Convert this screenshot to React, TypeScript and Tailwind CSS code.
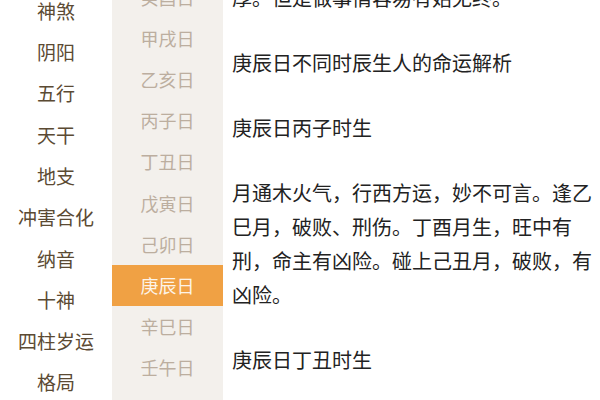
import React from "react";

const leftItems = ["神煞", "阴阳", "五行", "天干", "地支", "冲害合化", "纳音", "十神", "四柱岁运", "格局"];
const midItems = ["癸酉日", "甲戌日", "乙亥日", "丙子日", "丁丑日", "戊寅日", "己卯日", "庚辰日", "辛巳日", "壬午日", "癸未日"];

export default function App() {
  const font = { fontFamily: '"Noto Sans CJK SC", "Noto Sans", sans-serif' };
  return (
    <div className="w-[600px] h-[400px] overflow-hidden flex bg-white" style={font}>
      <div className="w-[112px] shrink-0 flex flex-col -mt-[9.6px]">
        {leftItems.map((t) => (
          <div key={t} className="h-[41.3px] shrink-0 flex items-center justify-center text-[19px] text-[#5b4a33]">
            {t}
          </div>
        ))}
      </div>
      <div className="w-[111px] shrink-0 bg-[#f3f0ec] flex flex-col -mt-[23.4px]">
        {midItems.map((t) => (
          <div
            key={t}
            className={
              t === "庚辰日"
                ? "h-[41.2px] shrink-0 flex items-center justify-center text-[18px] bg-[#f0a144] text-[#fdf4e8]"
                : "h-[41.2px] shrink-0 flex items-center justify-center text-[18px] text-[#bcae9f]"
            }
          >
            {t}
          </div>
        ))}
      </div>
      <div className="flex-1 pl-[9px] pr-2 -mt-[19px] text-[20px] leading-[34px] text-[#222222]">
        <p className="w-[360px] mb-[31px]">厚。但是做事情容易有始无终。</p>
        <p className="w-[360px] mb-[31px]">庚辰日不同时辰生人的命运解析</p>
        <p className="w-[360px] mb-[31px]">庚辰日丙子时生</p>
        <p className="w-[360px] mb-[31px]">月通木火气，行西方运，妙不可言。逢乙巳月，破败、刑伤。丁酉月生，旺中有刑，命主有凶险。碰上己丑月，破败，有凶险。</p>
        <p className="w-[360px] mb-[31px]">庚辰日丁丑时生</p>
      </div>
    </div>
  );
}
